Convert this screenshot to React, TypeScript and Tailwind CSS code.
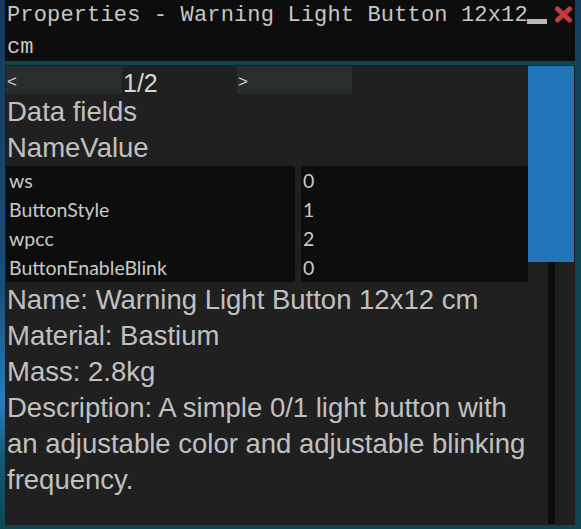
import React from 'react';

const fields = [
  { name: 'ws', value: '0' },
  { name: 'ButtonStyle', value: '1' },
  { name: 'wpcc', value: '2' },
  { name: 'ButtonEnableBlink', value: '0' },
];

const info = [
  'Name: Warning Light Button 12x12 cm',
  'Material: Bastium',
  'Mass: 2.8kg',
  'Description: A simple 0/1 light button with an adjustable color and adjustable blinking frequency.',
];

function CloseIcon() {
  return (
    <svg width="19" height="17" viewBox="0 0 19 17" className="mt-[6px] ml-[7px] shrink-0">
      <path d="M3.5 3 L15.5 14 M15.5 3 L3.5 14" stroke="#c23b3e" strokeWidth="5" strokeLinecap="round" />
    </svg>
  );
}

export default function App() {
  return (
    <div className="w-[581px] h-[529px] flex bg-[#0b4750] overflow-hidden">
      {/* left frame */}
      <div className="w-[5px] shrink-0 bg-[linear-gradient(180deg,#15395a_0%,#1a4f78_55%,#2a7dbd_76%,#155a78_86%,#0b4750_100%)]" />

      <div className="w-[570px] flex flex-col pb-[4px]">
        {/* title bar */}
        <div className="h-[61px] shrink-0 bg-[#0e0d0e] flex items-start pl-[2px]">
          <div className="w-[521px] text-[22px] leading-[32px] tracking-[0.15px] text-[#c6c6c6] font-['Liberation_Mono',monospace]">
            Properties - Warning Light Button 12x12 cm
          </div>
          <div className="w-[20px] h-[5px] mt-[19px] -ml-[1px] bg-[#b9b9b9] shrink-0" />
          <CloseIcon />
        </div>

        <div className="h-[4px] shrink-0" />

        {/* content */}
        <div className="flex-1 flex border border-[#2c1b1e] bg-[#212021] text-[#c0c0c0] font-['Liberation_Sans',Arial,sans-serif]">
          <div className="w-[522px] flex flex-col">
            <div className="h-[28px] flex shrink-0">
              <div className="w-[116px] bg-[#2a2d2e] pl-[1px] pt-[2px] text-[17px] leading-[28px] text-[#d2d2d2]">&lt;</div>
              <div className="w-[115px] pl-[1px] pt-[3px] text-[25px] leading-[28px] text-[#d6d6d6]">1/2</div>
              <div className="w-[115px] bg-[#2a2d2e] pl-[1px] pt-[2px] text-[17px] leading-[28px] text-[#d2d2d2]">&gt;</div>
            </div>

            <div className="pl-[1px] text-[27.5px] leading-[36px]">
              <div>Data fields</div>
              <div>NameValue</div>
            </div>

            <div className="grid grid-cols-[289px_227px] gap-x-[6px] font-['Lato',sans-serif] text-[19.5px] leading-[29px] text-[#c9c9c9]">
              {fields.map((f) => (
                <React.Fragment key={f.name}>
                  <div className="h-[29px] bg-[#0e0d0e] pl-[3px]">{f.name}</div>
                  <div className="h-[29px] bg-[#0e0d0e] pl-[2px]">{f.value}</div>
                </React.Fragment>
              ))}
            </div>

            <div className="pl-[1px] text-[27.5px] leading-[36px]">
              {info.map((line) => (
                <div key={line}>{line}</div>
              ))}
            </div>
          </div>

          {/* scrollbar */}
          <div className="w-[46px] flex flex-col">
            <div className="h-[196px] bg-[#2274b8] shrink-0" />
            <div className="flex-1 pl-[20px]">
              <div className="w-[7px] h-full bg-[#0e0d0e]" />
            </div>
          </div>
        </div>
      </div>

      {/* right frame */}
      <div className="w-[6px] shrink-0 bg-[linear-gradient(180deg,#163f62_0%,#0b4750_30%,#0b4750_100%)]" />
    </div>
  );
}
